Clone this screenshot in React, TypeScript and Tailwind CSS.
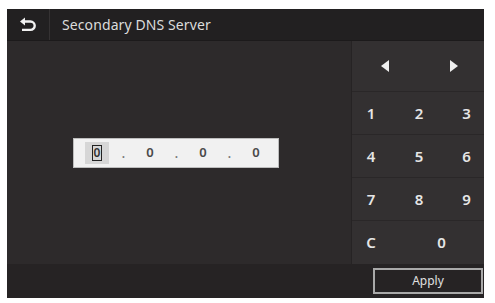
import React from "react";

const font = { fontFamily: '"Noto Sans", "Open Sans", Arial, sans-serif' };

function BackIcon() {
  return (
    <svg width="18" height="16" viewBox="0 0 18 16">
      <path d="M1 4.5 6 0.5v8z" fill="#f2f2f2" />
      <path d="M5 4.5h6.5a4.2 4.2 0 0 1 0 8.4H3" fill="none" stroke="#f2f2f2" strokeWidth="2.4" />
    </svg>
  );
}

function Octet({ active }: { active?: boolean }) {
  if (active) {
    return (
      <div className="w-[24px] h-[22px] flex items-center justify-center bg-[#d6d6d6]">
        <span className="w-[10px] h-[16px] border border-[#222] flex items-center justify-center text-[12px] font-semibold leading-none text-[#333]">0</span>
      </div>
    );
  }
  return <div className="w-[24px] text-center text-[13px] font-semibold text-[#4a4a4a]">0</div>;
}

function Dot() {
  return <div className="w-[29px] text-center text-[12px] font-semibold text-[#777] pt-[3px]">.</div>;
}

export default function App() {
  const rows = [
    ["1", "2", "3"],
    ["4", "5", "6"],
    ["7", "8", "9"],
  ];
  return (
    <div className="w-[495px] h-[303px] bg-white pt-[9px] pl-[7px]" style={font}>
      <div className="w-[477px] h-[289px] flex flex-col bg-[#2d2a2b]">
        {/* header */}
        <div className="h-[32px] flex bg-[#222021] border-b border-[#1c1a1b]">
          <div className="w-[43px] flex items-center justify-center border-r border-[#353233]">
            <BackIcon />
          </div>
          <div className="pl-[12px] flex items-center text-[14px] text-[#dcdcdc] tracking-[0.1px]">Secondary DNS Server</div>
        </div>

        {/* body */}
        <div className="flex-1 flex">
          <div className="flex-1 flex items-center justify-center pr-[6px]">
            <div className="w-[206px] h-[30px] bg-[#f1f1f1] border border-[#bdbdbd] flex items-center pl-[11px]">
              <Octet active />
              <Dot />
              <Octet />
              <Dot />
              <Octet />
              <Dot />
              <Octet />
            </div>
          </div>

          <div className="w-[133px] flex flex-col bg-[#333031] border-l border-[#262324] text-[15px] font-semibold text-[#e6e6e6]">
            <div className="h-[51px] flex items-center justify-between pl-[29px] pr-[26px] border-b border-[#2a2728]">
              <span className="w-0 h-0 border-y-[6px] border-y-transparent border-r-[8px] border-r-[#f0f0f0]" />
              <span className="w-0 h-0 border-y-[6px] border-y-transparent border-l-[8px] border-l-[#f0f0f0]" />
            </div>
            {rows.map((r) => (
              <div key={r[0]} className="h-[43px] grid grid-cols-[38px_58px_37px] items-center border-b border-[#2a2728]">
                {r.map((d) => (
                  <span key={d} className="text-center">{d}</span>
                ))}
              </div>
            ))}
            <div className="flex-1 grid grid-cols-[38px_95px] items-center">
              <span className="text-center">C</span>
              <span className="text-center pl-[8px]">0</span>
            </div>
          </div>
        </div>

        {/* bottom bar */}
        <div className="h-[34px] flex items-center justify-end bg-[#262324] pr-[1px]">
          <div className="w-[110px] h-[26px] border-2 border-[#a9a9a9] flex items-center justify-center text-[12px] text-[#e0e0e0]">
            Apply
          </div>
        </div>
      </div>
    </div>
  );
}
